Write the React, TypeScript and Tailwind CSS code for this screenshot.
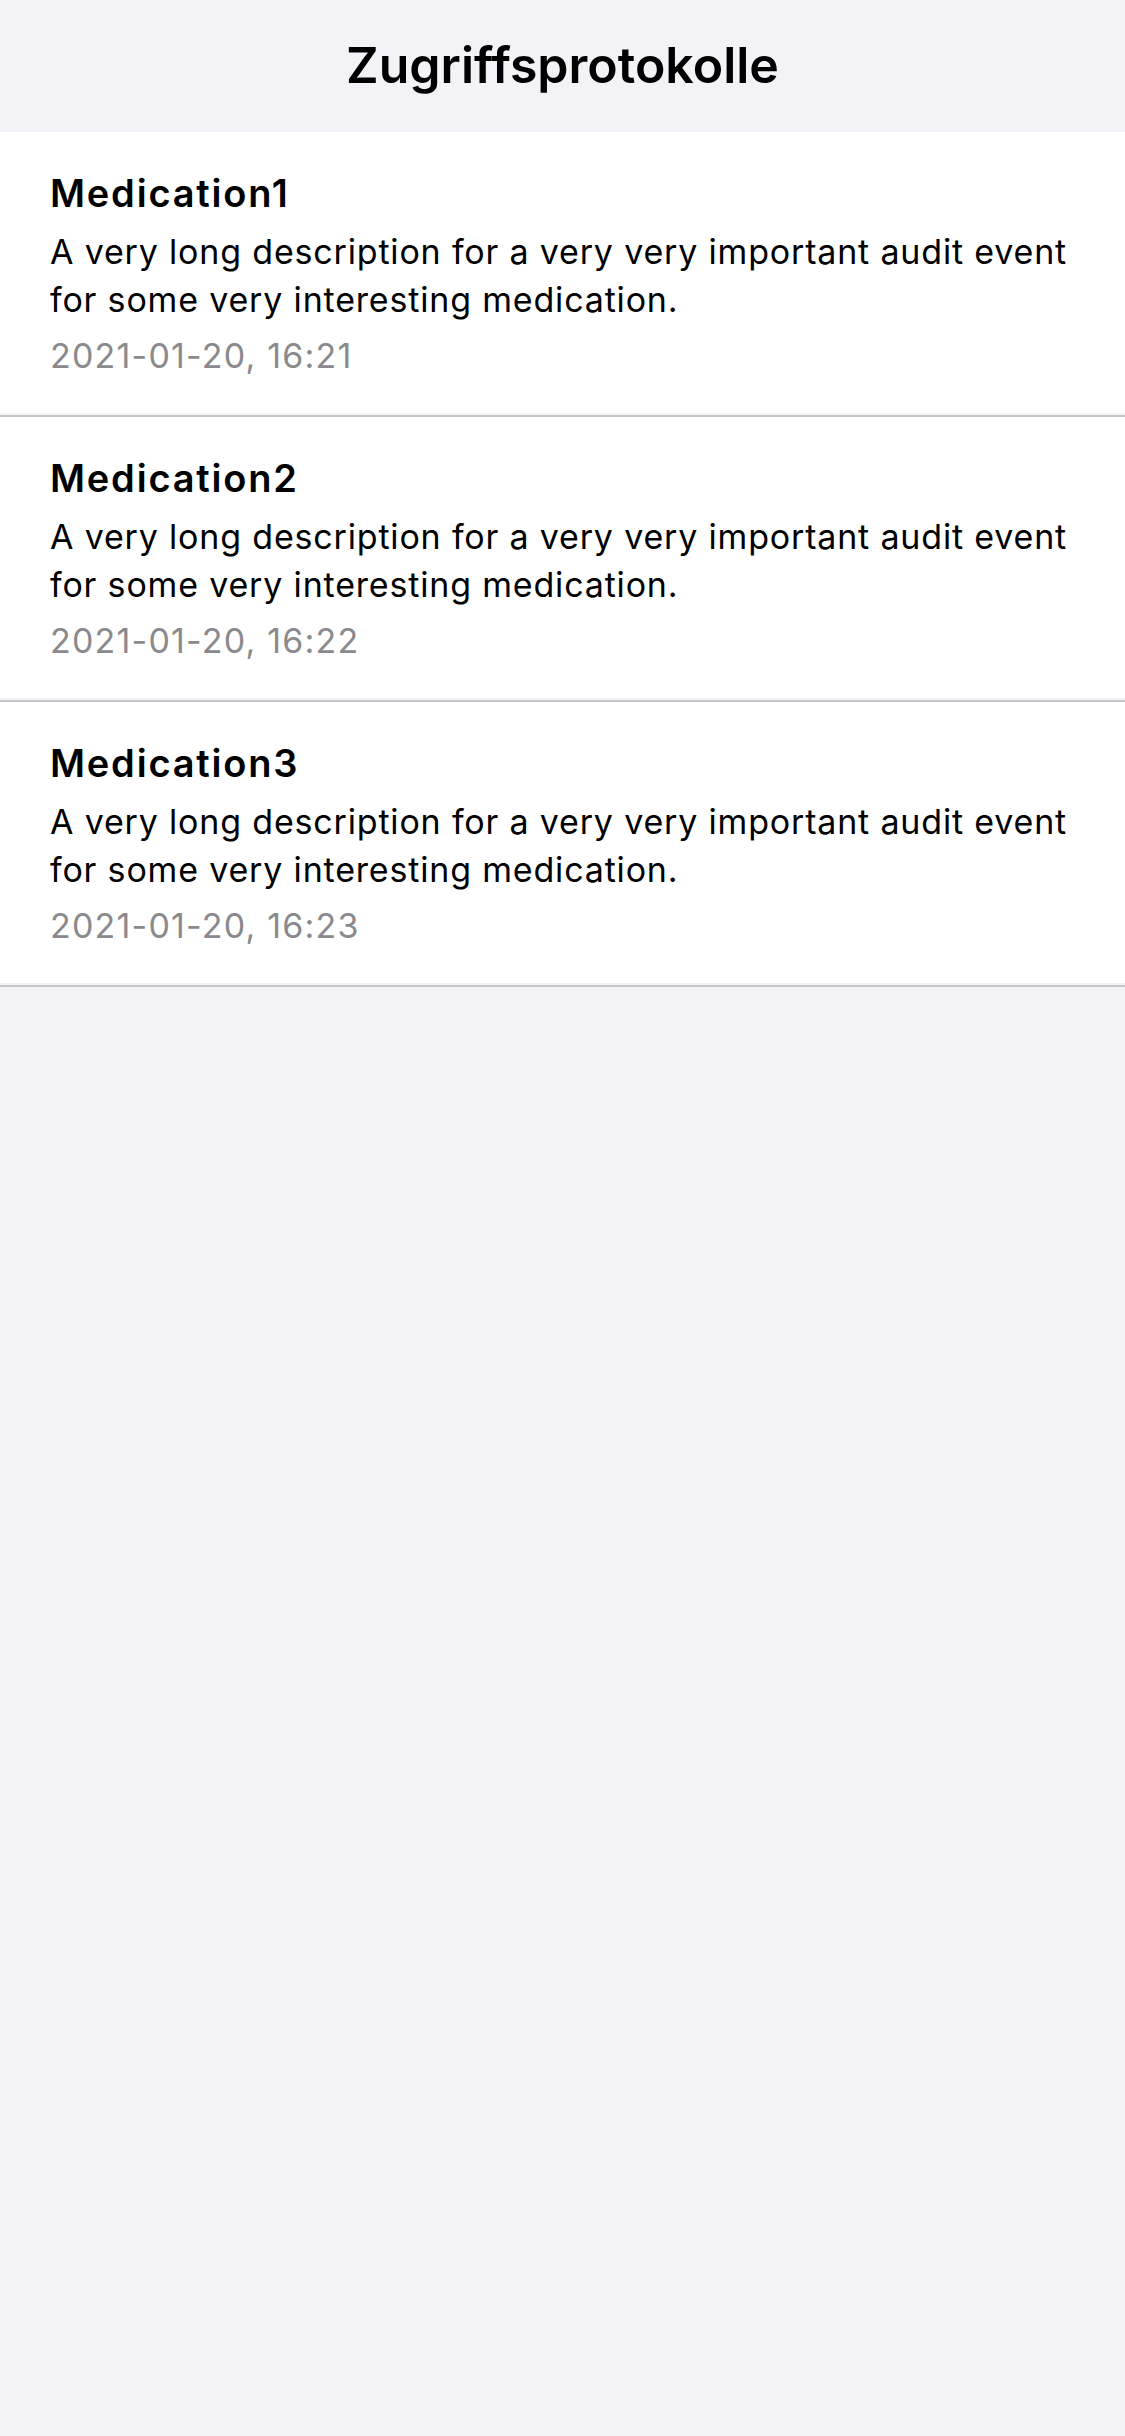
const entries = [
  { name: "Medication1", time: "2021-01-20, 16:21" },
  { name: "Medication2", time: "2021-01-20, 16:22" },
  { name: "Medication3", time: "2021-01-20, 16:23" },
];

const description =
  "A very long description for a very very important audit event for some very interesting medication.";

const AuditRow = ({ name, time }: { name: string; time: string }) => {
  return (
    <li>
      <div className="bg-white pl-[50px] pr-[36px] pt-[38px] pb-[33px]">
        <p className="text-[38px] leading-[46px] font-semibold tracking-[1.8px] text-black">{name}</p>
        <p className="mt-[12px] text-[34px] leading-[48px] tracking-[0.82px] text-black">{description}</p>
        <p className="mt-[8px] text-[34px] leading-[48px] tracking-[1.2px] text-[#8a8a8e]">{time}</p>
      </div>
      <div className="h-[2px] bg-[#f2f2f7]" />
      <div className="h-[2px] bg-[#c6c6c8]" />
    </li>
  );
};

export default function App() {
  return (
    <div className="min-h-screen bg-[#f2f2f7] font-['Inter',sans-serif] antialiased">
      <header className="flex h-[132px] items-center justify-center pb-[2px]">
        <h1 className="text-[50px] leading-none font-semibold text-black">Zugriffsprotokolle</h1>
      </header>
      <ul className="flex flex-col">
        {entries.map((e) => (
          <AuditRow key={e.name} name={e.name} time={e.time} />
        ))}
      </ul>
    </div>
  );
}
